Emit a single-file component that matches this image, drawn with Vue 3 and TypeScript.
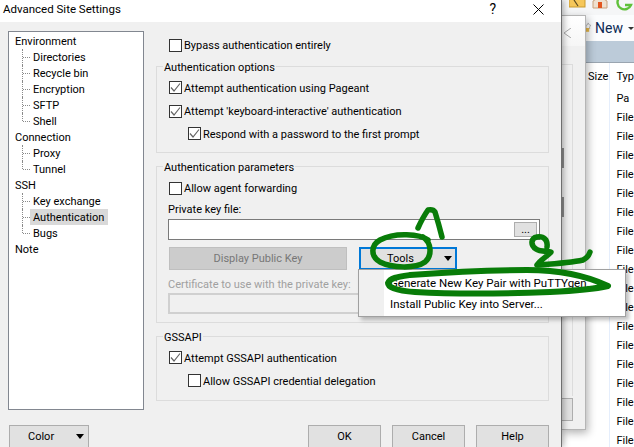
<script setup lang="ts">
const tree: { label: string; child?: boolean; selected?: boolean; last?: boolean }[] = [
  { label: 'Environment' },
  { label: 'Directories', child: true },
  { label: 'Recycle bin', child: true },
  { label: 'Encryption', child: true },
  { label: 'SFTP', child: true },
  { label: 'Shell', child: true, last: true },
  { label: 'Connection' },
  { label: 'Proxy', child: true },
  { label: 'Tunnel', child: true, last: true },
  { label: 'SSH' },
  { label: 'Key exchange', child: true },
  { label: 'Authentication', child: true, selected: true },
  { label: 'Bugs', child: true, last: true },
  { label: 'Note' },
]
const fileRows: string[] = ['Pa', ...Array.from({ length: 18 }, () => 'File')]
</script>

<template>
  <div class="screen">
    <div class="bg-strip">
      <svg class="strip-icons" width="65" height="15" viewBox="0 0 65 15">
        <rect x="0" y="-4" width="16" height="11" fill="#f6c75a" stroke="#c99a2e" />
        <path d="M5 0 L9 6" stroke="#5a4a20" stroke-width="1.2" />
        <path d="M24 8 V1 L31 -3 L38 1 V8 Z" fill="#eee0cf" stroke="#c9a27c" />
        <rect x="29" y="2" width="4" height="6" fill="#e2561f" />
        <path d="M61 -2 A7 7 0 1 0 62 5 H56" fill="none" stroke="#5fc13a" stroke-width="2.4" />
      </svg>
    </div>

    <div class="explorer">
      <div class="ex-tools">
        <svg width="8" height="16" viewBox="0 0 8 16">
          <path d="M0 4 L2 3 L3.5 0 L5 3 L8 4 L5.5 6 L6 9 H0 Z" fill="#fff" stroke="#999" />
          <rect x="0" y="8" width="5" height="6" fill="#e9b949" />
        </svg>
        <span class="ex-new">New</span>
        <span class="ex-caret"></span>
      </div>
      <div class="ex-band"></div>
      <div class="ex-list">
        <div class="ex-size">Size</div>
        <div class="ex-type">
          <div class="ex-type-head">Typ</div>
          <div v-for="(f, i) in fileRows" :key="i" class="ex-row">{{ f }}</div>
        </div>
      </div>
    </div>

    <div class="bg-window">
      <div class="bg-head">
        <svg width="9" height="10" viewBox="0 0 9 10"><path d="M8 0 L1 5 L8 10" fill="none" stroke="#a8a8a8" /></svg>
      </div>
      <div class="bg-inner">
        <div class="bg-box">
          <div class="bg-mark first"></div>
          <div class="bg-mark second"></div>
        </div>
        <div class="bg-btn"></div>
      </div>
    </div>

    <div class="dialog">
      <div class="titlebar">
        <span class="title">Advanced Site Settings</span>
        <span class="help-glyph">?</span>
        <svg class="close" width="11" height="11" viewBox="0 0 11 11"><path d="M0.5 0.5 L10.5 10.5 M10.5 0.5 L0.5 10.5" stroke="#000" /></svg>
      </div>

      <div class="main">
        <div class="tree">
          <div
            v-for="item in tree"
            :key="item.label"
            class="node"
            :class="{ child: item.child, last: item.last }"
          >
            <span class="node-label" :class="{ selected: item.selected }">{{ item.label }}</span>
          </div>
        </div>

        <div class="pane">
          <label class="check top-check"><span class="box low"></span>Bypass authentication entirely</label>

          <div class="group g1">
            <div class="legend">Authentication options</div>
            <label class="check"><span class="box">
              <svg width="11" height="11" viewBox="0 0 11 11"><path d="M1 5.5 L4 9 L10 1.5" fill="none" stroke="#666" stroke-width="1.2" /></svg>
            </span>Attempt authentication using Pageant</label>
            <label class="check"><span class="box low">
              <svg width="11" height="11" viewBox="0 0 11 11"><path d="M1 5.5 L4 9 L10 1.5" fill="none" stroke="#666" stroke-width="1.2" /></svg>
            </span>Attempt 'keyboard-interactive' authentication</label>
            <label class="check sub"><span class="box">
              <svg width="11" height="11" viewBox="0 0 11 11"><path d="M1 5.5 L4 9 L10 1.5" fill="none" stroke="#666" stroke-width="1.2" /></svg>
            </span>Respond with a password to the first prompt</label>
          </div>

          <div class="group g2">
            <div class="legend">Authentication parameters</div>
            <label class="check"><span class="box low"></span>Allow agent forwarding</label>
            <div class="field-label">Private key file:</div>
            <div class="input">
              <span class="browse">...</span>
            </div>
            <div class="btn-row">
              <div class="btn disabled display-btn">Display Public Key</div>
              <div class="tools-wrap">
                <div class="btn tools-btn">
                  <span class="tools-text">Tools</span>
                  <span class="arrow"></span>
                </div>
                <div class="menu">
                  <div class="menu-item">Generate New Key Pair with PuTTYgen...</div>
                  <div class="menu-item">Install Public Key into Server...</div>
                </div>
              </div>
            </div>
            <div class="field-label muted cert-label">Certificate to use with the private key:</div>
            <div class="input disabled-input"></div>
          </div>

          <div class="group g3">
            <div class="legend">GSSAPI</div>
            <label class="check"><span class="box">
              <svg width="11" height="11" viewBox="0 0 11 11"><path d="M1 5.5 L4 9 L10 1.5" fill="none" stroke="#666" stroke-width="1.2" /></svg>
            </span>Attempt GSSAPI authentication</label>
            <label class="check sub"><span class="box"></span>Allow GSSAPI credential delegation</label>
          </div>
        </div>
      </div>

      <div class="footer">
        <div class="btn color-btn"><span>Color</span><span class="arrow"></span></div>
        <div class="footer-right">
          <div class="btn foot-btn">OK</div>
          <div class="btn foot-btn">Cancel</div>
          <div class="btn foot-btn">Help</div>
        </div>
      </div>
    </div>

    <svg class="ink" width="634" height="447" viewBox="0 0 634 447">
      <g fill="none" stroke="#087c08" stroke-width="5.5" stroke-linecap="round" stroke-linejoin="round">
        <path d="M428 240 C420 234 395 232 380 240 C371 245 370 256 380 262 C392 268 415 269 425 262 C432 256 432 243 423 237" />
        <path d="M418 228 Q423 217 428 210 Q433 209 435 212 Q439 225 442 237" />
        <path d="M547 247 C548 240 544 236 537 237 C531 238 530 245 536 249 C540 252 548 251 551 252 C548 256 540 260 537 265 C552 264 570 263 583 260 C587 258 589 255 590 252" />
        <path stroke-width="6" d="M388 283 C390 278 397 277 410 275 C450 272 500 270 527 270 C555 270 585 275 608 286 C590 290 570 291 550 292 C500 294 450 294 415 292 C400 291 388 288 388 283 Z" />
      </g>
    </svg>
  </div>
</template>

<style>
html, body { margin: 0; padding: 0; background: #fff; }
</style>

<style scoped>
.screen {
  position: relative;
  width: 634px;
  height: 447px;
  overflow: hidden;
  background: #fff;
  font-family: Roboto, "Noto Sans", sans-serif;
  font-size: 11px;
  line-height: 18px;
  color: #000;
}

/* Desktop windows behind the dialog */
.bg-strip {
  position: absolute;
  left: 561px;
  top: 0;
  width: 73px;
  height: 15px;
  background: #f5f6f7;
}
.strip-icons { position: absolute; left: 8px; top: 0; }
.bg-window {
  position: absolute;
  left: 561px;
  top: 15px;
  width: 25px;
  height: 415px;
  background: #f0f0f0;
  border-top: 1px solid #b5b5b5;
  border-right: 1px solid #b5b5b5;
  border-bottom: 1px solid #b5b5b5;
  box-shadow: 2px 3px 8px rgba(0, 0, 0, 0.3);
  box-sizing: border-box;
  display: flex;
  flex-direction: column;
}
.bg-head {
  height: 30px;
  background: linear-gradient(#fff, #f6f6f6);
  padding: 10px 0 0 2px;
  box-sizing: border-box;
}
.bg-inner { flex: 1; padding: 18px 12px 0 0; }
.bg-box {
  height: 332px;
  box-sizing: border-box;
  border-top: 1px solid #dcdcdc;
  border-right: 1px solid #dcdcdc;
}
.bg-mark { width: 2px; height: 20px; margin-left: 1px; background: #8c8c8c; }
.bg-mark.first { margin-top: 83px; }
.bg-mark.second { margin-top: 29px; }
.bg-btn {
  height: 23px;
  margin-top: 2px;
  box-sizing: border-box;
  background: #e1e1e1;
  border: 1px solid #adadad;
  border-left: none;
}
.explorer {
  position: absolute;
  left: 586px;
  top: 15px;
  width: 48px;
  height: 432px;
  background: #fff;
  overflow: hidden;
}
.ex-tools {
  height: 26px;
  background: #fbfcfd;
  display: flex;
  align-items: center;
  gap: 4px;
}
.ex-new { color: #0c2a55; font-size: 14px; }
.ex-caret {
  margin-left: 1px;
  width: 0;
  height: 0;
  border-left: 3px solid transparent;
  border-right: 3px solid transparent;
  border-top: 3px solid #333;
}
.ex-band {
  height: 21px;
  background: #bccbd9;
  border-bottom: 1px solid #9aa5b0;
}
.ex-list { display: flex; }
.ex-size {
  width: 27px;
  box-sizing: border-box;
  padding: 5px 0 0 2px;
  height: 385px;
}
.ex-type {
  flex: 1;
  border-left: 1px solid #e5eefc;
  padding-left: 6px;
  padding-top: 5px;
}
.ex-type-head { height: 21px; }
.ex-row { height: 19px; line-height: 19px; }

/* Dialog */
.dialog {
  position: relative;
  width: 562px;
  height: 447px;
  box-sizing: border-box;
  background: #f0f0f0;
  border-right: 1px solid #6f6f6f;
  box-shadow: 2px 0 6px rgba(0, 0, 0, 0.3);
}
.titlebar {
  height: 22px;
  background: #fff;
  display: flex;
  align-items: flex-start;
  line-height: 16px;
}
.title { margin: 1px 0 0 3px; font-size: 11.5px; }
.help-glyph { margin: 1px 0 0 auto; font-size: 14px; }
.close { margin: 4px 17px 0 37px; }

.main { display: flex; padding: 9px 0 0 8px; }
.tree {
  width: 136px;
  height: 379px;
  box-sizing: border-box;
  background: #fff;
  border: 1px solid #828790;
  padding-top: 1px;
}
.node {
  height: 16px;
  padding-left: 3px;
  position: relative;
  white-space: nowrap;
}
.node.child { padding-left: 21px; }
.node-label { display: inline-block; height: 16px; padding: 0 3px; }
.node-label.selected { background: #d9d9d9; width: 72px; }
.node.child::before {
  content: "";
  position: absolute;
  left: 13px;
  top: 0;
  height: 16px;
  border-left: 1px dotted #8a8a8a;
}
.node.child.last::before { height: 8px; }
.node.child::after {
  content: "";
  position: absolute;
  left: 14px;
  top: 8px;
  width: 7px;
  border-top: 1px dotted #8a8a8a;
}

.pane { width: 393px; margin-left: 12px; }
.check {
  display: flex;
  align-items: flex-start;
  height: 16px;
  white-space: nowrap;
}
.box {
  width: 13px;
  height: 13px;
  box-sizing: border-box;
  border: 1px solid #333;
  background: #fff;
  margin: 1px 2px 0 0;
  display: flex;
  align-items: center;
  justify-content: center;
  flex: none;
}
.box.low { margin-top: 2px; }
.top-check { margin: 6px 0 0 13px; }
.group {
  position: relative;
  box-sizing: border-box;
  border: 1px solid #dcdcdc;
  padding: 13px 8px 9px 12px;
}
.group .check + .check { margin-top: 7px; }
.group .check.sub { margin-left: 19px; }
.legend {
  position: absolute;
  top: -8px;
  left: 6px;
  padding: 0 1px;
  background: #f0f0f0;
}
.g1 { margin-top: 13px; height: 87px; }
.g2 { margin-top: 13px; height: 157px; padding-left: 11px; }
.g3 { margin-top: 13px; height: 65px; }
.g2 > .check { margin-left: 1px; }
.field-label { margin-top: 5px; height: 16px; white-space: nowrap; }
.muted { color: #a0a0a0; }
.cert-label { margin-top: 6px; }
.input {
  margin-top: 2px;
  height: 21px;
  width: 372px;
  box-sizing: border-box;
  background: #fff;
  border: 1px solid #7a7a7a;
  display: flex;
  justify-content: flex-end;
  align-items: center;
  padding-right: 2px;
}
.disabled-input {
  margin-top: 1px;
  background: #f0f0f0;
  border: 2px solid #d0d0d0;
}
.browse {
  width: 23px;
  height: 15px;
  box-sizing: border-box;
  border: 1px solid #adadad;
  background: #e1e1e1;
  text-align: center;
  line-height: 14px;
}
.btn {
  box-sizing: border-box;
  background: #e1e1e1;
  border: 1px solid #adadad;
  display: flex;
  align-items: center;
  justify-content: center;
  height: 23px;
  line-height: 16px;
}
.btn-row { display: flex; margin-top: 7px; padding-left: 1px; }
.display-btn {
  width: 178px;
  background: #cccccc;
  border-color: #bfbfbf;
  color: #777;
}
.tools-wrap { position: relative; margin-left: 12px; }
.tools-btn {
  width: 98px;
  border: 2px solid #0078d7;
  justify-content: flex-start;
  position: relative;
}
.tools-text { margin-left: 26px; }
.arrow {
  width: 0;
  height: 0;
  border-left: 4.5px solid transparent;
  border-right: 4.5px solid transparent;
  border-top: 5px solid #000;
}
.tools-btn .arrow { position: absolute; right: 3px; top: 7px; }
.menu {
  position: absolute;
  left: -1px;
  top: 22px;
  width: 268px;
  height: 48px;
  box-sizing: border-box;
  background: linear-gradient(to right, #f0f0f0 25px, #fff 25px);
  border: 1px solid #a0a0a0;
  box-shadow: 3px 3px 4px rgba(0, 0, 0, 0.25);
  padding-top: 3px;
  font-size: 11.5px;
  z-index: 2;
}
.menu-item { height: 21px; line-height: 21px; padding-left: 31px; white-space: nowrap; }

.footer {
  display: flex;
  justify-content: space-between;
  margin-top: 15px;
  padding: 0 12px 0 9px;
}
.color-btn {
  width: 80px;
  justify-content: flex-start;
  position: relative;
  padding-left: 18px;
}
.color-btn .arrow { position: absolute; right: 4px; top: 8px; }
.footer-right { display: flex; gap: 11px; }
.foot-btn { width: 73px; }

.ink { position: absolute; left: 0; top: 0; z-index: 3; pointer-events: none; }
</style>
